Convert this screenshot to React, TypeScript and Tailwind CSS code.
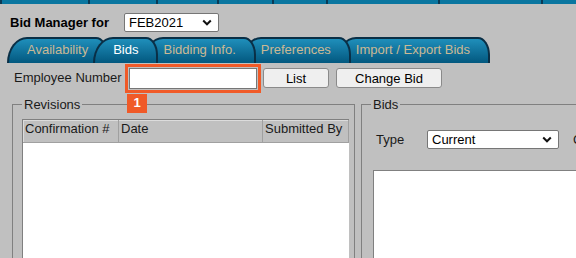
import React from "react";

const topSegments = ["w-[88px]", "w-[68px]", "w-[61px]", "w-[55px]", "w-[54px]", "w-[112px]", "w-[103px]"];

const tabs = [
  { label: "Availability", z: "z-50", active: false },
  { label: "Bids", z: "z-[60]", active: true },
  { label: "Bidding Info.", z: "z-40", active: false },
  { label: "Preferences", z: "z-30", active: false },
  { label: "Import / Export Bids", z: "z-20", active: false },
];

function Chevron() {
  return (
    <svg width="10" height="7" viewBox="0 0 10 7" className="shrink-0">
      <path d="M1.2 1.5l3.8 3.8 3.8-3.8" fill="none" stroke="#111" strokeWidth="2" />
    </svg>
  );
}

function FakeSelect({ value, width }: { value: string; width: string }) {
  return (
    <div
      className={`flex h-[19px] ${width} items-center justify-between rounded-[2px] border border-[#767676] bg-white pl-[4px] pr-[6px] text-[13px] leading-none text-black`}
    >
      <span>{value}</span>
      <Chevron />
    </div>
  );
}

export default function App() {
  return (
    <div className="h-[258px] w-[576px] overflow-hidden bg-[#c0c0c0] font-['Liberation_Sans',Arial,sans-serif] text-[13px] text-[#1a1a1a]">
      {/* top menu strip (cut off) */}
      <div className="flex h-[4px] bg-[#0a76a0]">
        <div className="w-[2px] bg-[#0b3a55]" />
        {topSegments.map((w, i) => (
          <div key={i} className={`${w} border-r-2 border-[#0b3a55]`} />
        ))}
        <div className="flex-1" />
      </div>

      <div className="mt-[9px] flex items-center pl-[10px]">
        <span className="w-[114px] font-bold text-black">Bid Manager for</span>
        <FakeSelect value="FEB2021" width="w-[95px]" />
      </div>

      {/* tabs */}
      <div className="mt-[4px] flex pl-[7px]">
        {tabs.map((t, i) => (
          <div
            key={t.label}
            className={`relative ${t.z} ${i > 0 ? "-ml-[15px]" : ""} flex h-[26px] shrink-0 items-center whitespace-nowrap rounded-tl-[20px_26px] rounded-tr-[12px_18px] border-2 border-b-0 border-[#0a2f46] bg-linear-to-b from-[#1f8fbb] to-[#03587f] pb-[1px] pl-[18px] pr-[18px] ${
              t.active ? "text-white" : "text-[#cbb994]"
            }`}
          >
            {t.label}
          </div>
        ))}
      </div>

      {/* employee row */}
      <div className="mt-[5px] flex items-start pl-[14px]">
        <span className="flex h-[21px] w-[115px] items-center">Employee Number</span>
        <div className="relative">
          <div className="h-[21px] w-[128px] border border-[#767676] bg-white" />
          <div className="absolute -inset-[4px] border-[3px] border-[#f05a28]" />
          <div className="absolute left-[-2px] top-[26px] flex h-[19px] w-[20px] items-center justify-center bg-[#f05a28] font-bold text-white">
            1
          </div>
        </div>
        <button className="ml-[6px] h-[20px] w-[66px] rounded-[3px] border border-[#8a8a8a] bg-[#efefef] text-[13px] text-black">
          List
        </button>
        <button className="ml-[7px] h-[20px] w-[106px] rounded-[3px] border border-[#8a8a8a] bg-[#efefef] text-[13px] text-black">
          Change Bid
        </button>
      </div>

      {/* panels */}
      <div className="mt-[8px] flex pl-[12px]">
        <fieldset className="h-[200px] w-[343px] shrink-0 border border-[#808080] pl-[9px] pr-[5px] pt-[6px]">
          <legend className="px-[2px] leading-[16px]">Revisions</legend>
          <div className="flex w-[327px] flex-col border-l border-t border-[#808080]">
            <div className="flex h-[23px] shadow-[inset_1px_1px_0_#dcdcdc]">
              <div className="w-[96px] border-b border-r border-[#a0a0a0] pl-[2px] leading-[17px]">Confirmation #</div>
              <div className="w-[144px] border-b border-r border-[#a0a0a0] pl-[2px] leading-[17px]">Date</div>
              <div className="flex-1 border-b border-r border-[#a0a0a0] pl-[2px] leading-[17px]">Submitted By</div>
            </div>
            <div className="h-[150px] bg-white" />
          </div>
        </fieldset>

        <fieldset className="ml-[6px] h-[200px] w-[320px] shrink-0 border border-[#808080] pl-[11px] pt-[17px]">
          <legend className="-ml-[2px] px-[2px] leading-[16px]">Bids</legend>
          <div className="flex items-center whitespace-nowrap pl-[3px]">
            <span className="w-[51px]">Type</span>
            <FakeSelect value="Current" width="w-[132px]" />
            <span className="ml-[14px]">Confirmation</span>
          </div>
          <div className="mt-[21px] h-[100px] border-l border-t border-[#808080] bg-white" />
        </fieldset>
      </div>
    </div>
  );
}
